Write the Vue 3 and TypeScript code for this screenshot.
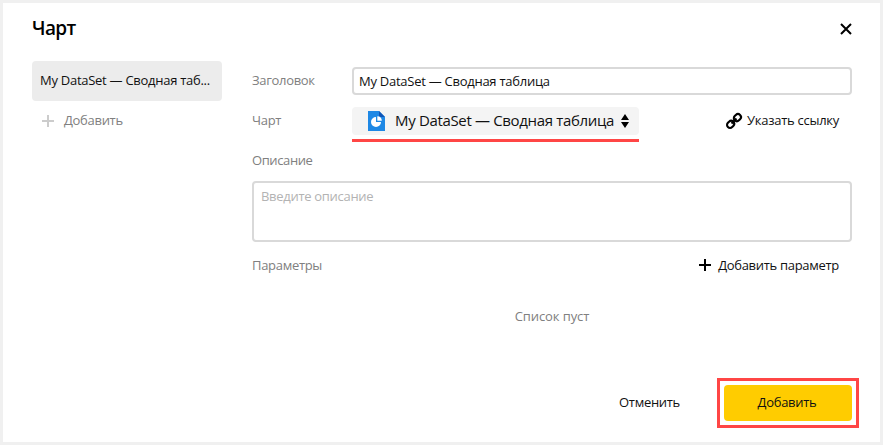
<script setup lang="ts">
import { ref } from 'vue'

const title = ref('My DataSet — Сводная таблица')
const description = ref('')
const tabTitle = 'My DataSet — Сводная таб...'
const chartName = 'My DataSet — Сводная таблица'
</script>

<template>
  <section class="dialog">
    <header class="header">
      <h1 class="heading">Чарт</h1>
      <button class="close" aria-label="Закрыть">
        <svg width="12" height="12" viewBox="0 0 12 12"><path d="M1 1L11 11M11 1L1 11" stroke="#000" stroke-width="2" /></svg>
      </button>
    </header>

    <div class="body">
      <aside class="sidebar">
        <div class="tab">{{ tabTitle }}</div>
        <button class="add-tab">
          <svg width="12" height="12" viewBox="0 0 12 12"><path d="M6 0V12M0 6H12" stroke="#ccc" stroke-width="2" /></svg>
          <span>Добавить</span>
        </button>
      </aside>

      <main class="form">
        <div class="row">
          <label class="label">Заголовок</label>
          <input v-model="title" class="input" type="text" />
        </div>
        <div class="row">
          <label class="label">Чарт</label>
          <div class="select-wrap">
            <button class="select">
              <svg class="file" width="17" height="20" viewBox="0 0 17 20">
                <path d="M0 0H11L17 6V20H0Z" fill="#1e88e5" />
                <path d="M11 0L17 6H11Z" fill="#1056b8" />
                <path d="M8 6V11H13A5 5 0 1 1 8 6Z" fill="#fff" />
                <path d="M9.3 5.2A4.7 4.7 0 0 1 13.8 9.8H9.3Z" fill="#fff" />
              </svg>
              <span class="select-text">{{ chartName }}</span>
              <svg class="arrows" width="8" height="14" viewBox="0 0 8 14"><path d="M4 0L8 6H0ZM0 8H8L4 14Z" fill="#000" /></svg>
            </button>
          </div>
          <button class="link">
            <svg width="16" height="16" viewBox="0 0 16 16" fill="none" stroke="#000" stroke-width="2.1">
              <g transform="rotate(-45 8 8)">
                <rect x="-0.6" y="5" width="7.6" height="6" rx="3" />
                <rect x="9" y="5" width="7.6" height="6" rx="3" />
                <path d="M4.5 8H11.5" />
              </g>
            </svg>
            <span>Указать ссылку</span>
          </button>
        </div>
        <div class="row"><label class="label label-desc">Описание</label></div>
        <textarea v-model="description" class="textarea" placeholder="Введите описание"></textarea>
        <div class="params">
          <span class="label">Параметры</span>
          <button class="add-param">
            <svg width="12" height="12" viewBox="0 0 12 12"><path d="M6 0V12M0 6H12" stroke="#000" stroke-width="2" /></svg>
            <span>Добавить параметр</span>
          </button>
        </div>
        <p class="empty">Список пуст</p>
      </main>
    </div>

    <footer class="footer">
      <button class="cancel">Отменить</button>
      <div class="highlight"><button class="submit">Добавить</button></div>
    </footer>
  </section>
</template>

<style>
body {
  overflow: hidden;
}
</style>

<style scoped>
.dialog,
.dialog * {
  box-sizing: border-box;
}
.dialog {
  display: flex;
  flex-direction: column;
  width: 883px;
  height: 445px;
  border: 3px solid #f0f0f0;
  background: #fff;
  color: #111;
  font: 13px/20px 'Open Sans', 'Noto Sans', sans-serif;
  letter-spacing: -0.3px;
}
button,
input,
textarea {
  margin: 0;
  padding: 0;
  border: 0;
  background: none;
  color: inherit;
  font: inherit;
  letter-spacing: inherit;
  outline: none;
}
svg {
  display: block;
  flex: none;
  overflow: visible;
}
button {
  display: flex;
  align-items: center;
  white-space: nowrap;
}
.header {
  display: flex;
  justify-content: space-between;
  align-items: center;
  height: 50px;
  padding: 0 28px 0 29px;
}
.heading {
  margin: 0;
  color: #000;
  font-size: 19px;
  font-weight: 600;
  line-height: 24px;
  letter-spacing: -0.6px;
}
.close {
  padding-top: 2px;
}
.body {
  display: flex;
  gap: 30px;
  padding: 8px 28px 0 29px;
}
.sidebar {
  width: 190px;
}
.tab {
  height: 40px;
  padding: 9px 8px 11px;
  border-radius: 4px;
  background: #ececec;
  white-space: nowrap;
  letter-spacing: -0.27px;
}
.add-tab {
  height: 40px;
  gap: 10px;
  padding-left: 10px;
  color: #808080;
}
.form {
  display: flex;
  flex-direction: column;
  width: 600px;
}
.row {
  display: flex;
  align-items: center;
  height: 40px;
}
.label {
  width: 100px;
  color: #808080;
}
.row .label,
.add-tab span,
.link span,
.cancel {
  padding-bottom: 2px;
}
.label-desc {
  letter-spacing: -0.4px;
}
.input {
  width: 500px;
  height: 28px;
  padding: 0 5px 1px;
  border: 2px solid #d9d9d9;
  border-radius: 4px;
  letter-spacing: -0.26px;
}
.select-wrap {
  height: 35px;
  margin-top: 7px;
  border-bottom: 3px solid #ff4645;
}
.select {
  width: 287px;
  height: 28px;
  padding: 0 10px 0 16px;
  border-radius: 4px;
  background: #f4f4f4;
  font-size: 15px;
  letter-spacing: -0.34px;
}
.select-text {
  margin-left: 10px;
  padding-bottom: 2px;
}
.arrows {
  margin-left: auto;
}
.link {
  gap: 5px;
  margin-left: auto;
  padding-right: 13px;
  letter-spacing: -0.27px;
}
.textarea {
  display: block;
  height: 61px;
  padding: 3px 7px;
  border: 2px solid #d9d9d9;
  border-radius: 4px;
  resize: none;
}
.textarea::placeholder {
  color: #b3b3b3;
  opacity: 1;
}
.params {
  display: flex;
  justify-content: space-between;
  align-items: center;
  height: 46px;
}
.add-param {
  gap: 7px;
  padding-right: 13px;
}
.empty {
  margin: 18px 0 0;
  color: #808080;
  text-align: center;
  letter-spacing: -0.1px;
}
.footer {
  display: flex;
  justify-content: flex-end;
  align-items: center;
  height: 50px;
  margin: auto 21px 14px 0;
}
.cancel {
  margin-right: 37px;
}
.highlight {
  width: 142px;
  height: 50px;
  padding: 4px;
  border: 3px solid #ff4645;
}
.submit {
  justify-content: center;
  width: 128px;
  height: 36px;
  padding: 0 2px 2px 0;
  border-radius: 4px;
  background: #ffcc00;
}
</style>
